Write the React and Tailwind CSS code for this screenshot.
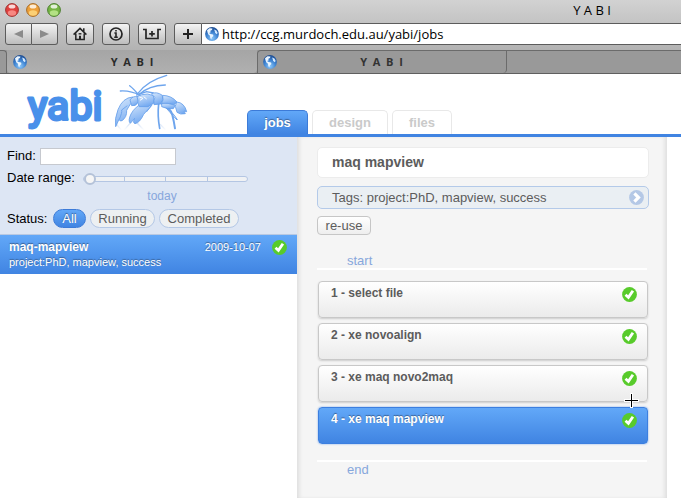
import React from "react";

const toolButton =
  "flex h-[22px] shrink-0 items-center justify-center border border-[#5c5c5c] bg-gradient-to-b from-[#f4f4f4] to-[#bdbdbd] text-[#222]";

const steps = ["1 - select file", "2 - xe novoalign", "3 - xe maq novo2maq", "4 - xe maq mapview"];

function Globe() {
  return (
    <svg className="h-[14px] w-[14px] shrink-0" viewBox="0 0 14 14" aria-hidden="true">
      <defs>
        <radialGradient id="globe" cx="50%" cy="80%" r="80%">
          <stop offset="0" stopColor="#8cc8fa" />
          <stop offset="0.55" stopColor="#3b80cf" />
          <stop offset="1" stopColor="#1c4a8e" />
        </radialGradient>
      </defs>
      <circle cx="7" cy="7" r="6.9" fill="url(#globe)" />
      <path d="M2 3.2 4.5 1.3 7.4 1.6 7 3 5.4 3.8 5.6 5.4 4 6 5.6 7 8 7.6 8.4 9 6.8 10.4 6.3 12.4 5.3 11 5 8.8 3.4 7.4 2.6 5.6Z" fill="#eaf5ff" />
      <path d="M9 2.5 11.4 3.4 12.7 6 11.6 7.2 10 5.8 9.8 4.2Z" fill="#d4eaff" />
    </svg>
  );
}

function Check() {
  return (
    <svg className="h-[15px] w-[15px] shrink-0" viewBox="0 0 15 15" aria-hidden="true">
      <circle cx="7.5" cy="7.5" r="7.4" fill="#58cb2b" />
      <path d="M3.5 7.8 6.4 10.3 10.9 3.8" fill="none" stroke="#fff" strokeWidth="2.8" />
    </svg>
  );
}

function Light({ body, rim, glow }) {
  return (
    <svg className="h-[14px] w-[14px]" viewBox="0 0 14 14" aria-hidden="true">
      <circle cx="7" cy="7" r="6.4" fill={body} stroke={rim} strokeWidth="1" />
      <ellipse cx="7" cy="10" rx="4.2" ry="2.8" fill={glow} opacity="0.75" />
      <ellipse cx="7" cy="3.4" rx="3.4" ry="2" fill="#fff" opacity="0.8" />
    </svg>
  );
}

function Crayfish() {
  return (
    <svg className="h-[57px] w-[75px]" viewBox="339 15 225 171" aria-hidden="true">
      <defs>
        <linearGradient id="shell" x1="0" y1="0" x2="0.4" y2="1">
          <stop offset="0" stopColor="#dbeafc" />
          <stop offset="1" stopColor="#76abf1" />
        </linearGradient>
        <linearGradient id="fade" x1="0" y1="0" x2="0" y2="1">
          <stop offset="0" stopColor="#d5e3f7" />
          <stop offset="1" stopColor="#fff" />
        </linearGradient>
      </defs>
      <g fill="none" stroke="url(#fade)" strokeWidth="4">
        <path d="M350 166 364 184M390 163 372 184M412 163 432 184M480 166 496 182" />
      </g>
      <g fill="none" stroke="#6ea5ed" strokeLinecap="round">
        <path d="M413 74Q440 36 500 19" strokeWidth="4" />
        <path d="M418 76Q446 50 496 48" strokeWidth="4" />
        <path d="M361 66Q392 64 422 80M389 50Q402 60 418 80" strokeWidth="4" />
        <path d="M410 78 440 68 460 72" strokeWidth="4" />
        <path d="M476 104Q472 142 479 178" strokeWidth="5" />
        <path d="M482 103Q510 112 517 138Q522 158 525 178" strokeWidth="6" />
        <path d="M492 110 530 152M500 118Q516 126 532 152M456 108 440 128" strokeWidth="3" />
      </g>
      <g fill="url(#shell)" stroke="#659fea" strokeWidth="2.5" strokeLinejoin="round">
        <path d="M398 84Q368 86 354 122Q343 149 347 173L357 151Q359 158 366 155Q381 145 380 124L391 105Q408 98 412 91Z" />
        <path d="M358 151Q367 130 365 123L382 110" fill="none" />
        <path d="M432 101Q406 111 393 135Q383 155 391 163L404 148Q397 161 405 164Q419 162 431 136L453 111Z" />
        <path d="M390 93Q398 80 413 83L415 98Q408 113 395 110Z" />
        <path d="M411 83Q424 75 443 75L460 80 463 101 444 113 418 113Q411 101 414 94Z" />
        <path d="M454 75Q469 66 487 79Q493 92 481 105L462 107Q460 93 465 85Z" />
        <path d="M488 79Q515 80 531 99L522 107Q502 101 485 103Q492 93 488 79Z" />
        <path d="M485 104Q505 101 526 109L520 119Q501 121 485 113Z" />
        <path d="M530 99Q553 101 560 128L552 126 556 134Q541 138 531 130L526 112Z" />
      </g>
      <path d="M418 84 429 88 420 94M431 83 440 90" fill="none" stroke="#fff" strokeWidth="3" />
    </svg>
  );
}

function BrowserChrome() {
  return (
    <div className="overflow-hidden bg-gradient-to-b from-[#d2d2d2] to-[#a4a4a4] font-['Open_Sans','Noto_Sans',sans-serif]">
      <div className="flex h-[23px] items-start">
        <div className="flex w-[66px] shrink-0 gap-[7px] pt-[3px] pl-[5px]">
          <Light body="#e0403e" rim="#9d3433" glow="#ffa09a" />
          <Light body="#eda03a" rim="#a66b27" glow="#ffe08a" />
          <Light body="#76b544" rim="#4c7f30" glow="#c8f09a" />
        </div>
        <div className="w-[1052px] shrink-0 text-center text-[13px] leading-[20px] whitespace-pre text-black">Y A B I</div>
      </div>
      <div className="flex h-[27px] items-start gap-2 pl-[5px]">
        <div className="flex shrink-0">
          <button aria-label="Back" className={toolButton + " w-[27px] rounded-l-[3px]"}>
            <svg className="h-2 w-[9px]" viewBox="0 0 9 8"><path d="M0 4 9 0V8Z" fill="#8b8b8b" /></svg>
          </button>
          <button aria-label="Forward" className={toolButton + " w-[26px] rounded-r-[3px] border-l-0"}>
            <svg className="h-2 w-[9px]" viewBox="0 0 9 8"><path d="M9 4 0 0V8Z" fill="#8b8b8b" /></svg>
          </button>
        </div>
        <button aria-label="Home" className={toolButton + " w-7 rounded-[3px]"}>
          <svg className="h-[14px] w-[14px]" viewBox="0 0 14 14" fill="none" stroke="#252525" strokeWidth="1.5">
            <path d="M.6 7.6 7 1.4 13.4 7.6M2.8 6.6V12.6H11.2V6.6M10.8 4.6V1.2" />
            <path d="M7 12.5V8.8" strokeWidth="2" />
            <path d="M5.6 6.8H8.4" strokeWidth="1.4" />
          </svg>
        </button>
        <button aria-label="Info" className={toolButton + " w-7 rounded-[3px]"}>
          <svg className="h-[14px] w-[14px]" viewBox="0 0 14 14" fill="none" stroke="#252525">
            <circle cx="7" cy="7" r="6" strokeWidth="1.7" />
            <path d="M7 3V4.6M5.4 6H7V10M5.2 10.3H8.8" strokeWidth="1.6" />
          </svg>
        </button>
        <button aria-label="Web clip" className={toolButton + " w-7 rounded-[3px]"}>
          <svg className="h-3 w-[18px]" viewBox="0 0 18 12" fill="none" stroke="#252525" strokeWidth="1.7">
            <path d="M0 1.5H3V10.5H15V1.5H18M9 3V8.6M6.2 5.8H11.8" />
          </svg>
        </button>
        <div className="flex min-w-0 flex-1">
          <button aria-label="Add bookmark" className={toolButton + " w-7 rounded-l-[3px]"}>
            <svg className="h-[10px] w-[10px]" viewBox="0 0 10 10"><path d="M5 0V10M0 5H10" stroke="#222" strokeWidth="2" /></svg>
          </button>
          <label className="flex h-[22px] min-w-0 flex-1 items-center gap-[3px] border-y border-[#5c5c5c] bg-white pl-[3px]">
            <Globe />
            <input aria-label="Address" defaultValue="http://ccg.murdoch.edu.au/yabi/jobs" className="h-5 min-w-0 flex-1 bg-transparent text-[13px] text-black outline-none" />
          </label>
        </div>
      </div>
      <div className="flex h-6 border-b border-[#5f5f5f] bg-[#999]">
        <div className="w-[7px] shrink-0 rounded-tr-[4px] border-t border-r border-[#6b6b6b]" />
        <button className="flex w-[250px] shrink-0 items-center rounded-b-[4px] bg-gradient-to-b from-[#a5a5a5] to-[#b0b0b0] pl-[6px]">
          <Globe />
          <span className="flex-1 pt-px pr-5 text-center text-[11px] font-bold whitespace-pre text-[#2b2b2b]">Y  A  B  I</span>
        </button>
        <button className="flex w-[250px] shrink-0 items-center rounded-tl-[4px] rounded-br-[4px] border-t border-x border-[#6b6b6b] pl-[5px]">
          <Globe />
          <span className="flex-1 pr-5 text-center text-[11px] font-bold whitespace-pre text-[#333]">Y  A  B  I</span>
        </button>
        <div className="flex-1 border-t border-[#6b6b6b]" />
      </div>
    </div>
  );
}

function Header() {
  const idle = "rounded-t-[5px] border border-b-0 border-[#e8e8e8] text-[#cacaca]";
  return (
    <header className="flex h-[63px] items-end border-b-[3px] border-[#4084e2] bg-white">
      <div className="flex h-full w-[247px] shrink-0 items-start pl-[25px]">
        <svg className="h-[60px] w-[88px]" viewBox="0 0 88 60" role="img" aria-label="yabi">
          <text x="3" y="46" fontFamily="Roboto, sans-serif" fontSize="41" fontWeight="400" fill="#4990ea" stroke="#4990ea" strokeWidth="3" strokeLinejoin="round">yabi</text>
        </svg>
        <Crayfish />
      </div>
      <nav className="flex h-6 gap-1 text-[13px] leading-6 font-bold">
        <button className="w-[61px] rounded-t-[5px] border border-b-0 border-[#3c7bd8] bg-gradient-to-b from-[#62a8f8] to-[#4084e2] text-white [text-shadow:0_-1px_1px_#3a5f91]">jobs</button>
        <button className={idle + " w-[76px]"}>design</button>
        <button className={idle + " w-[60px]"}>files</button>
      </nav>
    </header>
  );
}

function Sidebar() {
  const pill = "h-[19px] rounded-full border border-[#b4c8e6] bg-[#edf0f2] leading-[17px] text-[#5c5c5c]";
  return (
    <aside className="w-[297px] shrink-0 bg-white">
      <div className="flex h-[98px] flex-col border-b border-[#b9c9e2] bg-[#dde6f4] pt-[10px] pl-[7px] text-[13px] text-black">
        <div className="flex h-[18px] items-center gap-1">
          <label htmlFor="find">Find:</label>
          <input id="find" className="h-[17px] w-[136px] border border-[#c6c9cf] bg-white px-1 text-xs outline-none" />
        </div>
        <div className="mt-1 flex h-[18px] items-center gap-2">
          <label htmlFor="range">Date range:</label>
          <div className="relative mt-[2px] flex h-[14px] w-[165px] items-center">
            <input
              id="range"
              type="range"
              min="0"
              max="4"
              defaultValue="0"
              className="h-[14px] w-full appearance-none bg-transparent [&::-webkit-slider-runnable-track]:h-[6px] [&::-webkit-slider-runnable-track]:rounded-full [&::-webkit-slider-runnable-track]:border [&::-webkit-slider-runnable-track]:border-[#b4c6e3] [&::-webkit-slider-runnable-track]:bg-[#f0f2f4] [&::-webkit-slider-thumb]:-mt-1 [&::-webkit-slider-thumb]:h-3 [&::-webkit-slider-thumb]:w-3 [&::-webkit-slider-thumb]:appearance-none [&::-webkit-slider-thumb]:rounded-full [&::-webkit-slider-thumb]:border-2 [&::-webkit-slider-thumb]:border-[#b4c2d8] [&::-webkit-slider-thumb]:bg-[#f6f6f6]"
            />
            <span className="absolute top-[5px] left-1/4 h-1 w-px bg-[#b4c6e3]" />
            <span className="absolute top-[5px] left-1/2 h-1 w-px bg-[#b4c6e3]" />
            <span className="absolute top-[5px] left-3/4 h-1 w-px bg-[#b4c6e3]" />
          </div>
        </div>
        <div className="h-[18px] w-[310px] text-center text-xs leading-[18px] text-[#87a7dc]">today</div>
        <div className="mt-1 flex h-[19px] items-center gap-1">
          <span className="w-[42px]">Status:</span>
          <button aria-pressed="true" className="h-[19px] w-[33px] rounded-full border border-[#3c7bd8] bg-gradient-to-b from-[#62a8f8] to-[#4084e2] leading-[17px] text-white [text-shadow:0_-1px_1px_#3a5f91]">All</button>
          <button aria-pressed="false" className={pill + " w-[65px]"}>Running</button>
          <button aria-pressed="false" className={pill + " w-20"}>Completed</button>
        </div>
      </div>
      <button className="flex h-[39px] w-full flex-col bg-gradient-to-b from-[#62a8f8] to-[#4084e2] pt-1 pr-[10px] pl-[9px] text-left text-[11px] text-white [text-shadow:0_-1px_1px_#3a5f91]">
        <span className="flex h-4 w-full items-center">
          <strong className="flex-1 text-xs leading-[14px]">maq-mapview</strong>
          <span className="mr-[11px]">2009-10-07</span>
          <Check />
        </span>
        <span className="leading-[14px]">project:PhD, mapview, success</span>
      </button>
    </aside>
  );
}

function Workflow() {
  return (
    <main className="min-w-0 flex-1 bg-[#f5f5f5] pt-[10px] pr-[18px] pl-5 text-[13px] text-[#5c5c5c] shadow-[inset_4px_0_4px_-2px_#dcdcdc,inset_-4px_0_4px_-2px_#dcdcdc]">
      <h1 className="h-[31px] rounded-[5px] border border-[#ececec] bg-white pl-[14px] text-sm leading-[29px] font-bold">maq mapview</h1>
      <button className="mt-2 flex h-[23px] w-full items-center justify-between rounded-[5px] border border-[#b4cae9] bg-[#eaeff3] pr-1 pl-[14px]">
        <span>Tags: project:PhD, mapview, success</span>
        <svg className="h-[15px] w-[15px]" viewBox="0 0 15 15" aria-hidden="true">
          <circle cx="7.5" cy="7.5" r="7.4" fill="#b4c8e6" />
          <path d="M5.4 3.4 9.5 7.5 5.4 11.6" fill="none" stroke="#fff" strokeWidth="3.2" />
        </svg>
      </button>
      <button className="mt-[7px] block h-[19px] w-[54px] rounded-[4px] border border-[#c6c6c6] bg-gradient-to-b from-white to-[#eee] leading-[17px]">re-use</button>
      <div className="mt-[15px] mr-[2px] h-5 border-b-2 border-white pl-[30px] leading-[22px] text-[#87a7dc]">start</div>
      <div className="mt-[11px] mr-px ml-px flex flex-col gap-[5px]">
        {steps.map((step, i) => (
          <button
            key={step}
            className={
              "flex h-[37px] items-start justify-between rounded-[4px] border pt-[5px] pr-[10px] pl-3 text-xs leading-3 font-bold " +
              (i === 3
                ? "border-[#3c7fe0] bg-gradient-to-b from-[#62a8f8] to-[#4084e2] text-white shadow-[0_0_2px_#6fa4ec] [text-shadow:0_-1px_1px_#3a5f91]"
                : "border-[#c8c8c8] bg-gradient-to-b from-white to-[#ebebeb] shadow-[0_1px_2px_#ccc]")
            }
          >
            <span>{step}</span>
            <Check />
          </button>
        ))}
      </div>
      <div className="mt-4 mr-[2px] border-t-2 border-white pl-[30px] leading-4 text-[#87a7dc]">end</div>
    </main>
  );
}

export default function App() {
  return (
    <div className="relative flex min-h-screen flex-col overflow-hidden bg-white font-['Liberation_Sans',Arial,sans-serif]">
      <BrowserChrome />
      <Header />
      <div className="flex flex-1 pr-[14px]">
        <Sidebar />
        <Workflow />
      </div>
      <svg className="pointer-events-none absolute top-[393px] left-[624px] h-[15px] w-[15px]" viewBox="0 0 15 15" aria-hidden="true">
        <path d="M7.5 0V15M0 7.5H15" stroke="#fff" strokeWidth="3" />
        <path d="M7.5 1V14M1 7.5H14" stroke="#000" strokeWidth="1" />
      </svg>
    </div>
  );
}
